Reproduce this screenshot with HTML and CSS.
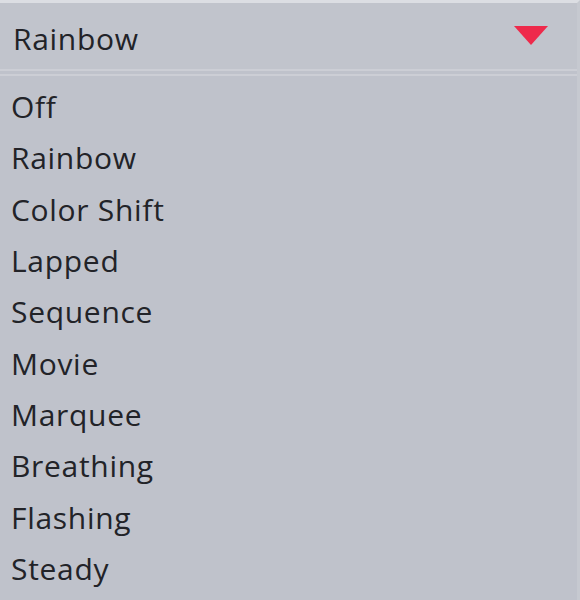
FILE: index.html
```html
<!DOCTYPE html>
<html>
<head>
<meta charset="utf-8">
<link rel="stylesheet" href="styles.css">
</head>
<body>
<div class="dropdown">
  <div class="header">
    <span class="current">Rainbow</span>
    <svg class="arrow" width="34" height="19" viewBox="0 0 34 19"><path d="M0 0 L34 0 L17 19 Z" fill="#ee2a4b"/></svg>
  </div>
  <div class="sep"></div>
  <ul class="list">
    <li>Off</li>
    <li>Rainbow</li>
    <li>Color Shift</li>
    <li>Lapped</li>
    <li>Sequence</li>
    <li>Movie</li>
    <li>Marquee</li>
    <li>Breathing</li>
    <li>Flashing</li>
    <li>Steady</li>
  </ul>
</div>
</body>
</html>
```
FILE: styles.css
```css
html, body {
  margin: 0;
  padding: 0;
  background: #bfc2cb;
}
.dropdown {
  width: 580px;
  height: 600px;
  box-sizing: border-box;
  background: #bfc2cb;
  border-top: 3px solid #dcdee3;
  border-right: 3px solid #c6c9d0;
  font-family: "Open Sans", "Noto Sans", sans-serif;
  font-size: 30px;
  letter-spacing: 0.7px;
  color: #222328;
  overflow: hidden;
}
.header {
  height: 66px;
  display: flex;
  align-items: center;
  justify-content: space-between;
  padding: 0 29px 0 13px;
  background: #c1c4cc;
}
.current {
  line-height: 1;
  margin-top: 6px;
}
.arrow {
  display: block;
  margin-top: -2px;
}
.sep {
  height: 3px;
  border-top: 2px solid #ccced5;
  border-bottom: 2px solid #ccced5;
  margin-bottom: 5px;
}
.list {
  list-style: none;
  margin: 0;
  padding: 0 0 0 11px;
}
.list li {
  height: 51.33px;
  line-height: 51.33px;
}
```
